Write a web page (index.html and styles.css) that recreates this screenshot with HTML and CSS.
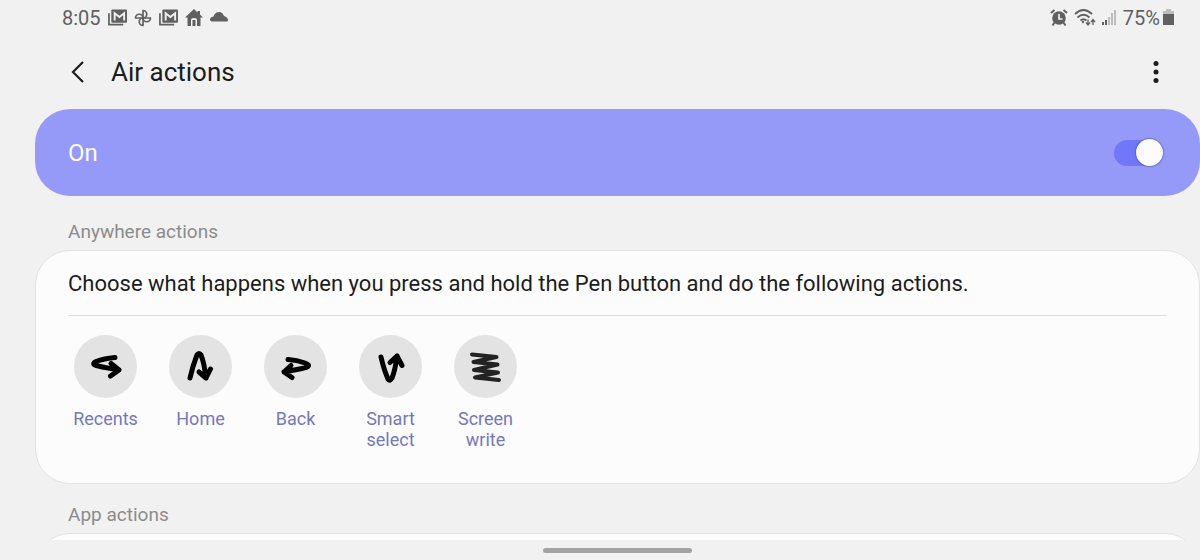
FILE: index.html
```html
<!DOCTYPE html>
<html lang="en">
<head>
    <meta charset="UTF-8" />
    <meta name="viewport" content="width=device-width, initial-scale=1.0" />
    <title>Air actions</title>
    <link rel="stylesheet" href="styles.css">
</head>
<body>
    <div class="status-bar">
        <div class="status-left">
            <span class="status-text">8:05</span>
            <svg class="icon-mail" viewBox="0 0 20 18">
                <path d="M1 4v12h15" fill="none" stroke="#606060" stroke-width="1.8" />
                <rect x="3.5" y="0" width="16.5" height="14" rx="1" fill="#606060" />
                <path d="M7 11.5V4l5 4 5-4v7.5" fill="none" stroke="#f1f1f1" stroke-width="2" />
            </svg>
            <svg class="icon-fan" viewBox="0 0 18 18" fill="none" stroke="#606060" stroke-width="1.7" stroke-linejoin="round">
                <path d="M9 9V1.5a3.7 3.7 0 0 1 0 7.5" />
                <path d="M9 9h7.5a3.7 3.7 0 0 1-7.5 0" />
                <path d="M9 9v7.5a3.7 3.7 0 0 1 0-7.5" />
                <path d="M9 9H1.5a3.7 3.7 0 0 1 7.5 0" />
            </svg>
            <svg class="icon-mail" viewBox="0 0 20 18">
                <path d="M1 4v12h15" fill="none" stroke="#606060" stroke-width="1.8" />
                <rect x="3.5" y="0" width="16.5" height="14" rx="1" fill="#606060" />
                <path d="M7 11.5V4l5 4 5-4v7.5" fill="none" stroke="#f1f1f1" stroke-width="2" />
            </svg>
            <svg class="icon-home" viewBox="0 0 18 18" fill="#606060">
                <path d="M9 0L0 8.5h2.5V17H6v-6q0-2 3-2t3 2v6h3.5V8.5H18l-3-3V2h-2.5v1.5z" />
                <rect x="7.5" y="11" width="3" height="6" />
            </svg>
            <svg class="icon-cloud" viewBox="0 0 18 18" fill="#606060">
                <path d="M1.5 12.5Q0 12 0 10.5Q0 8 3.5 7.5Q5 3 9 3Q12.5 3 14 7Q18 8 18 11.5Q18 12.5 17 12.5z" />
            </svg>
        </div>
        <div class="status-right">
            <svg class="icon-alarm" viewBox="0 0 18 18">
                <circle cx="9" cy="9" r="6.8" fill="#606060" />
                <path d="M1 4L4.5 1M17 4L13.5 1M4.5 13.5l-2 3M13.5 13.5l2 3" stroke="#606060" stroke-width="2" />
                <path d="M9 5v5h3.5" fill="none" stroke="#f1f1f1" stroke-width="1.7" />
            </svg>
            <svg class="icon-wifi" viewBox="0 0 22 18" fill="none" stroke="#606060" stroke-width="1.9">
                <path d="M1 5q8.5-8 17 0M3.5 8.5q6-5.5 12 0M6.5 11.5q3-2.5 6 0" />
                <circle cx="9" cy="13" r="1.2" fill="#606060" stroke="none" />
                <path d="M14 10.5v5.5M12 13.5l2 2.5 2-2.5M19 16v-5.5M17 13l2-2.5 2 2.5" stroke-width="1.3" />
            </svg>
            <svg class="icon-signal" viewBox="0 0 15 18">
                <path d="M0 13h2v3H0zM3 11h2v5H3z" fill="#606060" />
                <path d="M6 8h2v8H6zM9 4h2v12H9zM12 1h2v15h-2z" fill="#bdbdbd" />
            </svg>
            <span class="status-text">75%</span>
            <svg class="icon-battery" viewBox="0 0 12 18">
                <path d="M3 0h5v2h3v3H0V2h3z" fill="#bdbdbd" />
                <path d="M0 5h11v10.5q0 .5-.5.5H.5q-.5 0-.5-.5z" fill="#606060" />
            </svg>
        </div>
    </div>

    <header class="header">
        <button class="icon-button" type="button" aria-label="Back">
            <svg class="icon-back" viewBox="0 0 14 24">
                <path d="M12 2L2 12l10 10" fill="none" stroke="#1c1c1c" stroke-width="2.2" />
            </svg>
        </button>
        <h1>Air actions</h1>
        <button class="icon-button" type="button" aria-label="More options">
            <svg class="icon-more" viewBox="0 0 6 24" fill="#1c1c1c">
                <circle cx="3" cy="3.5" r="2.5" />
                <circle cx="3" cy="12" r="2.5" />
                <circle cx="3" cy="20.5" r="2.5" />
            </svg>
        </button>
    </header>

    <main class="content">
        <div class="master-switch">
            <label for="air-actions">On</label>
            <input class="switch" id="air-actions" type="checkbox" role="switch" checked>
        </div>

        <h2 class="section-title">Anywhere actions</h2>
        <section class="card">
            <p class="description">Choose what happens when you press and hold the Pen button and do the following actions.</p>
            <div class="actions">
                <button class="action" type="button">
                    <svg class="gesture" viewBox="0 0 63 63">
                        <circle cx="31.5" cy="31.5" r="31.5" />
                        <path d="M41 22.5Q30 23.500 22 26.500Q18 28.500 21 30Q24 31.500 45 35M37 28.500L45 35L36.500 41" />
                    </svg>
                    <span>Recents</span>
                </button>
                <button class="action" type="button">
                    <svg class="gesture" viewBox="0 0 63 63">
                        <circle cx="31.5" cy="31.5" r="31.5" />
                        <path d="M21 43Q24 30 28 20Q30 17 32 20Q35 27 37 43M30 37L37 43L41.5 34" />
                    </svg>
                    <span>Home</span>
                </button>
                <button class="action" type="button">
                    <svg class="gesture" viewBox="0 0 63 63">
                        <circle cx="31.5" cy="31.5" r="31.5" />
                        <path d="M24 24.5Q33 25 41 28Q46 30 44 31.5Q43 32.5 38 33.5L20 37M27 30.5L20 37L28 42.5" />
                    </svg>
                    <span>Back</span>
                </button>
                <button class="action" type="button">
                    <svg class="gesture" viewBox="0 0 63 63">
                        <circle cx="31.5" cy="31.5" r="31.5" />
                        <path d="M22 22Q25 35 29 44Q31 47 33 43Q36 36 38 21M31 27.5L38 21L43 30.5" />
                    </svg>
                    <span>Smart select</span>
                </button>
                <button class="action" type="button">
                    <svg class="gesture gesture-write" viewBox="0 0 63 63">
                        <circle cx="31.5" cy="31.5" r="31.5" />
                        <path d="M18 19.5L42.5 22L19.5 27L43.500 29.5L20 35L44 37.5L21 42.5L45 45" />
                    </svg>
                    <span>Screen write</span>
                </button>
            </div>
        </section>

        <h2 class="section-title section-title-app">App actions</h2>
        <section class="card card-next"></section>
    </main>

    <div class="nav-bar">
        <div class="nav-handle"></div>
    </div>
</body>
</html>
```
FILE: styles.css
```css
* {
    box-sizing: border-box;
}

body {
    margin: 0;
    height: 100vh;
    display: flex;
    flex-direction: column;
    overflow: hidden;
    background: #f1f1f1;
    color: #1c1c1c;
    font-family: Roboto, "Liberation Sans", sans-serif;
}

h1, h2, p {
    margin: 0;
    font-weight: 400;
}

button {
    padding: 0;
    border: 0;
    background: none;
    color: inherit;
    font-family: inherit;
    cursor: pointer;
}

svg {
    display: block;
    flex: none;
}

/* status bar */
.status-bar {
    height: 36px;
    flex: none;
    display: flex;
    justify-content: space-between;
    align-items: center;
    padding: 0 25px 0 62px;
    color: #606060;
}

.status-left,
.status-right {
    display: flex;
    align-items: center;
    gap: 6px;
}

.status-left {
    gap: 7px;
}

.status-text {
    font-size: 20px;
    line-height: 24px;
}

.status-right .status-text {
    margin-right: -3px;
}

.icon-mail {
    width: 19px;
    height: 18px;
}

.icon-fan,
.icon-home,
.icon-cloud,
.icon-alarm {
    width: 18px;
    height: 18px;
}

.icon-wifi {
    width: 22px;
    height: 18px;
}

.icon-signal {
    width: 15px;
    height: 18px;
}

.icon-battery {
    width: 12px;
    height: 18px;
}

/* title row */
.header {
    height: 73px;
    flex: none;
    display: flex;
    align-items: center;
    padding: 0 34px 2px 61px;
}

.header h1 {
    flex: 1;
    margin-left: 16px;
    font-size: 26px;
    line-height: 32px;
}

.icon-button {
    display: flex;
    align-items: center;
    justify-content: center;
    width: 34px;
    height: 40px;
}

.icon-button:last-child {
    width: 20px;
}

.icon-back {
    width: 14px;
    height: 24px;
}

.icon-more {
    width: 6px;
    height: 24px;
}

/* settings list */
.content {
    flex: 1;
    min-height: 0;
    overflow: hidden;
    padding-left: 35px;
}

.master-switch {
    display: flex;
    align-items: center;
    justify-content: space-between;
    height: 87px;
    padding: 0 37px 0 33px;
    border-radius: 35px;
    background: #959af8;
    color: #fcfcfc;
    font-size: 24px;
    line-height: 28px;
}

.switch {
    appearance: none;
    display: flex;
    align-items: center;
    justify-content: flex-end;
    width: 49px;
    height: 26px;
    margin: 0;
    border-radius: 13px;
    background: #7078f8;
    cursor: pointer;
}

.switch::before {
    content: "";
    flex: none;
    width: 27px;
    height: 27px;
    border-radius: 50%;
    background: #fcfcfc;
    box-shadow: 0 0 1px 1px rgba(60, 60, 130, 0.4);
}

.switch:not(:checked) {
    justify-content: flex-start;
    background: #b0b0b0;
}

.section-title {
    padding: 24px 33px 6px;
    color: #8c8c8c;
    font-size: 19px;
    line-height: 24px;
}

.section-title-app {
    padding-top: 19px;
}

.card {
    padding: 0 32px 33px;
    border: 1px solid #e2e2e2;
    border-radius: 35px;
    background: #fcfcfc;
}

.card-next {
    height: 90px;
}

.description {
    padding: 19px 0 17px;
    border-bottom: 1px solid #dedede;
    font-size: 22px;
    line-height: 28px;
}

.actions {
    display: flex;
    gap: 20px;
    padding-top: 19px;
}

.action {
    display: flex;
    flex-direction: column;
    align-items: center;
    gap: 10px;
    width: 75px;
    color: #7478bc;
    font-size: 18px;
    line-height: 21px;
}

.gesture {
    width: 63px;
    height: 63px;
    fill: none;
    stroke: #000;
    stroke-width: 5;
    stroke-linecap: round;
    stroke-linejoin: round;
}

.gesture circle {
    fill: #e3e3e3;
    stroke: none;
}

.gesture-write {
    stroke: #222;
    stroke-width: 4;
}

/* gesture bar */
.nav-bar {
    height: 20px;
    flex: none;
    display: flex;
    justify-content: center;
    align-items: center;
    padding-left: 34px;
}

.nav-handle {
    width: 149px;
    height: 5px;
    border-radius: 3px;
    background: #a4a4a4;
}
```
